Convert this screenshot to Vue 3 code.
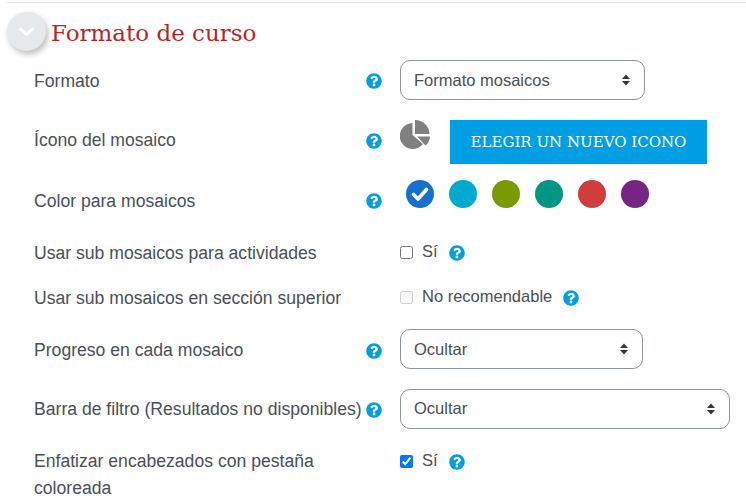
<script setup>
const help = 'M504 256c0 136.997-111.043 248-248 248S8 392.997 8 256C8 119.083 119.043 8 256 8s248 111.083 248 248zM262.655 90c-54.497 0-89.255 22.957-116.549 63.758-3.536 5.286-2.353 12.415 2.715 16.258l34.699 26.31c5.205 3.947 12.621 3.008 16.665-2.122 17.864-22.658 30.113-35.797 57.303-35.797 20.429 0 45.698 13.148 45.698 32.958 0 14.976-12.363 22.667-32.534 33.976C247.128 238.528 216 254.941 216 296v4c0 6.627 5.373 12 12 12h56c6.627 0 12-5.373 12-12v-1.333c0-28.462 83.186-29.647 83.186-106.667 0-58.002-60.165-102-116.531-102zM256 338c-25.365 0-46 20.635-46 46 0 25.364 20.635 46 46 46s46-20.636 46-46c0-25.365-20.635-46-46-46z'
const colors = ['#1670cc', '#00a9ce', '#7a9a01', '#009681', '#d13c3c', '#772583']
</script>

<template>
  <main class="page">
    <hr class="rule" />
    <header class="head">
      <span class="toggle">
        <svg width="16" height="16" viewBox="0 0 16 16"><path d="M1.500 5 7.500 10.500 13.500 5" fill="none" stroke="#fff" stroke-width="3" stroke-linecap="round" stroke-linejoin="round" /></svg>
      </span>
      <h2 class="title">Formato de curso</h2>
    </header>

    <div class="row r1">
      <label class="lab">Formato</label>
      <svg class="help" viewBox="0 0 512 512"><path :d="help" /></svg>
      <div class="sel" style="width: 245px"><span>Formato mosaicos</span><svg class="arrows" viewBox="0 0 10 12"><path d="M5 .5 9 5H1zM5 11.500 1 7h8z" /></svg></div>
    </div>

    <div class="row r2">
      <label class="lab">Ícono del mosaico</label>
      <svg class="help" viewBox="0 0 512 512"><path :d="help" /></svg>
      <div class="iconfield">
        <svg class="pie" width="31" height="30" viewBox="0 0 31 30">
          <path d="M12.500 3A13 13 0 1 0 23 24L12.500 15z" fill="#808080" />
          <path d="M15 0a14.500 14.500 0 0 1 14.500 14H15z" fill="#808080" />
          <path d="M17 16.500h13a13 13 0 0 1-4.500 9z" fill="#808080" />
        </svg>
        <button class="choose" type="button">ELEGIR UN NUEVO ICONO</button>
      </div>
    </div>

    <div class="row r3">
      <label class="lab">Color para mosaicos</label>
      <svg class="help" viewBox="0 0 512 512"><path :d="help" /></svg>
      <div class="swatches">
        <span v-for="(c, i) in colors" :key="c" class="dot" :style="{ background: c }">
          <svg v-if="i === 0" width="18" height="16" viewBox="0 0 18 16"><path d="M2.500 8.500 7 13 15.500 3.500" fill="none" stroke="#fff" stroke-width="3.600" stroke-linecap="round" stroke-linejoin="round" /></svg>
        </span>
      </div>
    </div>

    <div class="row r4">
      <label class="lab">Usar sub mosaicos para actividades</label>
      <span></span>
      <div class="check"><input type="checkbox" /><span class="txt">Sí</span><svg class="help" viewBox="0 0 512 512"><path :d="help" /></svg></div>
    </div>

    <div class="row r5">
      <label class="lab">Usar sub mosaicos en sección superior</label>
      <span></span>
      <div class="check"><input type="checkbox" disabled /><span class="txt">No recomendable</span><svg class="help" viewBox="0 0 512 512"><path :d="help" /></svg></div>
    </div>

    <div class="row r6">
      <label class="lab">Progreso en cada mosaico</label>
      <svg class="help" viewBox="0 0 512 512"><path :d="help" /></svg>
      <div class="sel" style="width: 243px"><span>Ocultar</span><svg class="arrows" viewBox="0 0 10 12"><path d="M5 .5 9 5H1zM5 11.500 1 7h8z" /></svg></div>
    </div>

    <div class="row r7">
      <label class="lab">Barra de filtro (Resultados no disponibles)</label>
      <svg class="help" viewBox="0 0 512 512"><path :d="help" /></svg>
      <div class="sel" style="width: 330px"><span>Ocultar</span><svg class="arrows" viewBox="0 0 10 12"><path d="M5 .5 9 5H1zM5 11.500 1 7h8z" /></svg></div>
    </div>

    <div class="row r8">
      <label class="lab wrap">Enfatizar encabezados con pestaña coloreada</label>
      <span></span>
      <div class="check"><input type="checkbox" checked /><span class="txt">Sí</span><svg class="help" viewBox="0 0 512 512"><path :d="help" /></svg></div>
    </div>
  </main>
</template>

<style>
html, body { margin: 0; background: #fff; overflow: hidden; }
</style>

<style scoped>
.page {
  width: 746px;
  height: 501px;
  overflow: hidden;
  font-family: "Liberation Sans", Arial, sans-serif;
  font-size: 16.500px;
  line-height: 24px;
  color: #495057;
  box-sizing: border-box;
}
.rule { margin: 2px 0 0 7px; border: 0; border-top: 1px solid #e3e3ec; }
.head { display: flex; align-items: flex-start; height: 57px; box-sizing: border-box; padding: 9px 0 0 7px; }
.toggle {
  width: 39px; height: 39px; border-radius: 50%;
  background: #e6e9ec;
  box-shadow: 2px 3px 6px rgba(0, 0, 0, .28);
  display: flex; align-items: center; justify-content: center;
  flex: none;
}
.title {
  margin: 6px 0 0 5px;
  font-family: "DejaVu Serif", serif;
  font-weight: 400;
  font-size: 23px;
  line-height: 30px;
  color: #c01f25;
}
.row {
  display: grid;
  grid-template-columns: 332px 34px 1fr;
  padding-left: 34px;
  box-sizing: border-box;
}
.lab { white-space: nowrap; font-size: 17.600px; }
.lab.wrap { white-space: normal; width: 300px; line-height: 27px; margin-top: -1px; }
.help { width: 16px; height: 16px; fill: #009fe3; display: block; }
.sel {
  position: relative;
  height: 40px;
  box-sizing: border-box;
  border: 1px solid #8f959e;
  border-radius: 10px;
  padding: 7px 13px;
  background: #fff;
}
.arrows { position: absolute; right: 13px; top: 13px; width: 10px; height: 12px; fill: #343a40; }
.r1 { height: 60px; }
.r1 .lab { margin-top: 9px; }
.r1 .help { margin-top: 13px; }
.r2 { height: 60px; }
.r2 .lab { margin-top: 8px; }
.r2 .help { margin-top: 13px; }
.iconfield { display: flex; align-items: flex-start; }
.pie { flex: none; }
.choose {
  margin-left: 19px;
  width: 257px; height: 44px;
  border: 0; padding: 0;
  background: #009fe3;
  color: #fff;
  font-family: "DejaVu Serif", serif;
  font-size: 15px;
  white-space: nowrap;
}
.r3 { height: 60px; }
.r3 .lab { margin-top: 9px; }
.r3 .help { margin-top: 13px; }
.swatches { display: flex; gap: 15px; margin-left: 6px; }
.dot { width: 28px; height: 28px; border-radius: 50%; display: flex; align-items: center; justify-content: center; }
.r4 { height: 45px; }
.r5 { height: 44px; }
.r4 .lab, .r5 .lab { margin-top: 1px; }
.check { display: flex; align-items: center; height: 24px; }
.check input { margin: 0 9px 0 0; width: 13px; height: 13px; flex: none; }
.check .txt { margin-top: -2px; }
.check .help { margin-left: 11px; margin-top: 1px; }
.r6 { height: 60px; }
.r6 .lab { margin-top: 9px; }
.r7 .lab { margin-top: 8px; }
.r6 .help { margin-top: 14px; }
.r7 .help { margin-top: 13px; }
.r7 .sel { padding-top: 6px; }
.r7 { height: 60px; }
.r8 { height: 52px; }
</style>
